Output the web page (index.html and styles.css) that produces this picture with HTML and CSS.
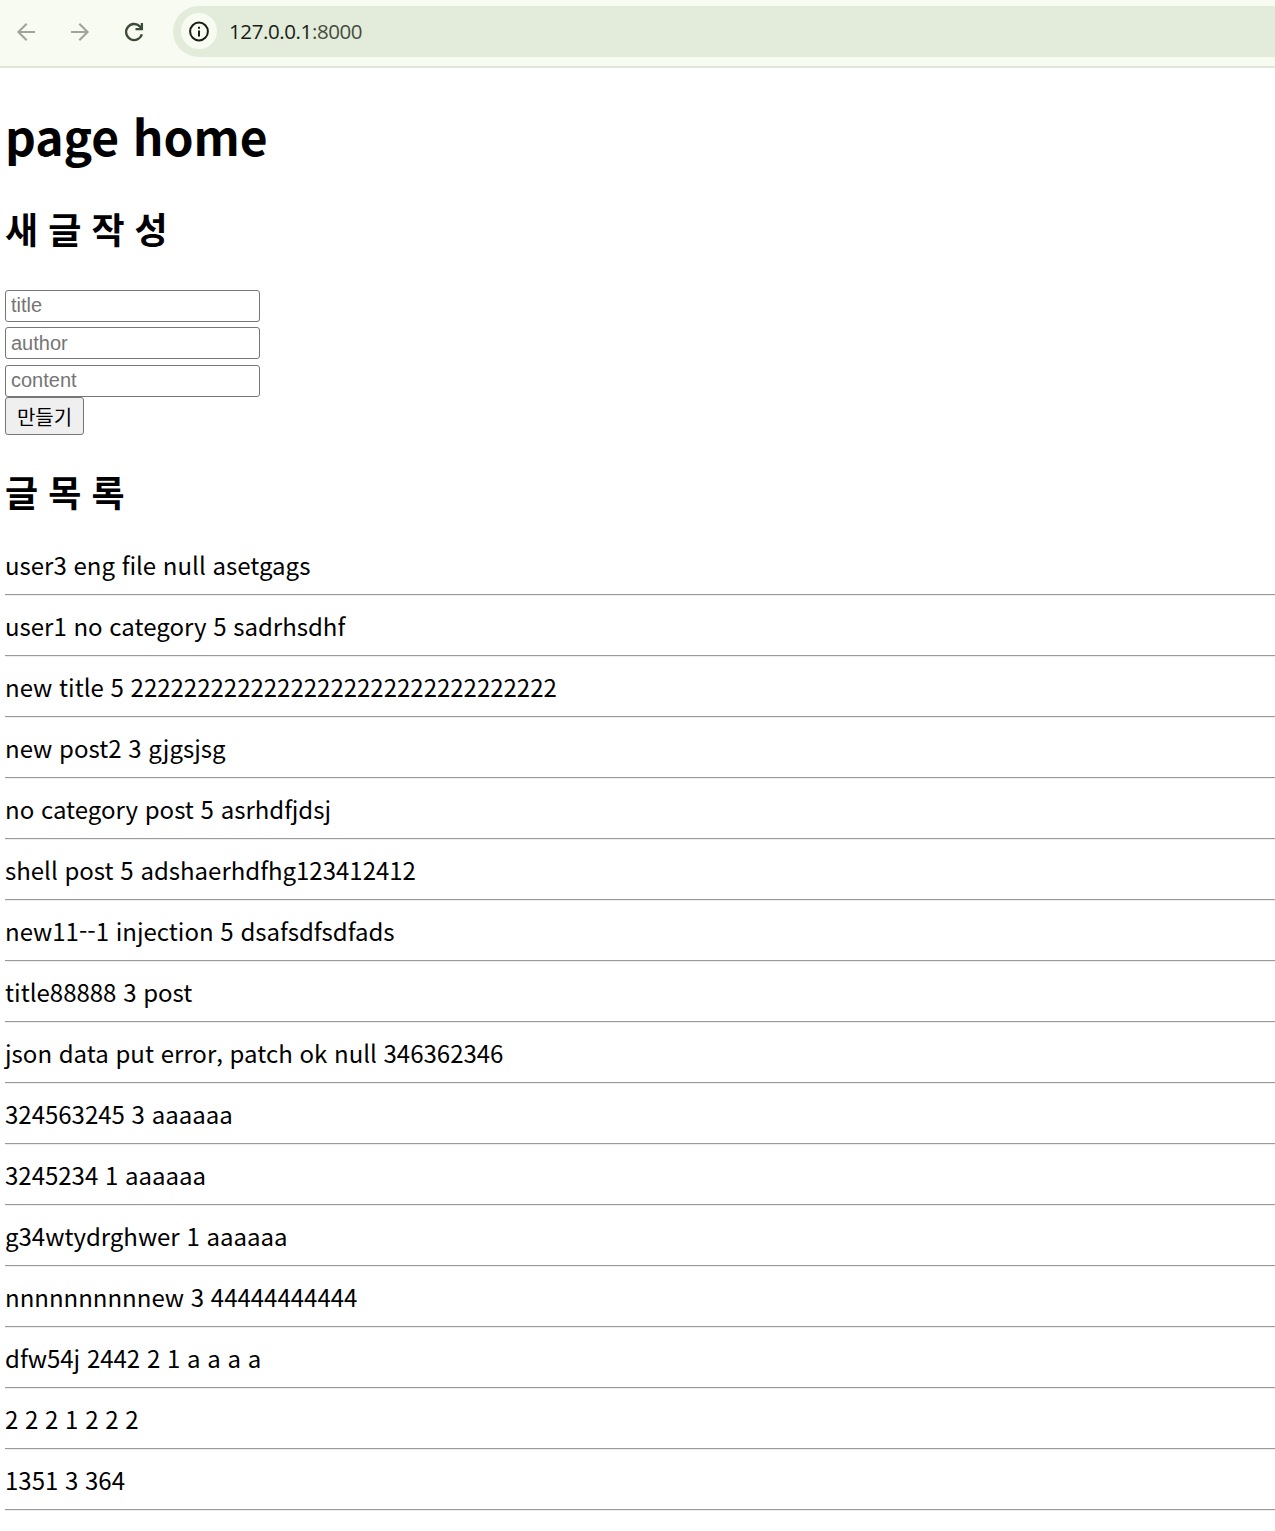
FILE: index.html
```html
<!DOCTYPE html>
<html lang="ko">
<head>
<meta charset="utf-8">
<title>page home</title>
<link rel="stylesheet" href="styles.css">
</head>
<body>
<header class="toolbar">
  <svg class="nav nav-back" width="24" height="24" viewBox="0 0 24 24"><path d="M21 13H4.500M12.700 4.700L4.400 13L12.700 21.300"/></svg>
  <svg class="nav nav-forward" width="24" height="24" viewBox="0 0 24 24"><path d="M3 13H19.500M11.300 4.700L19.600 13L11.300 21.300"/></svg>
  <svg class="nav nav-reload" width="24" height="24" viewBox="0 0 24 24"><path d="M19.800 15.200A8 8 0 1 1 18 7.600L20 9.600M19.900 4V10.200H13.500"/></svg>
  <div class="address">
    <span class="site-info"><svg width="24" height="24" viewBox="0 0 24 24"><circle cx="12" cy="12.500" r="8.900"/><path d="M12 11.500V17.500M12 7.700V9.700"/></svg></span>
    <span class="url">127.0.0.1<span class="port">:8000</span></span>
  </div>
</header>
<main class="page">
  <h1>page home</h1>
  <h2 class="new-title">새 글 작 성</h2>
  <form class="post-form">
    <input type="text" placeholder="title">
    <input type="text" placeholder="author">
    <input type="text" placeholder="content">
    <button type="button">만들기</button>
  </form>
  <h2 class="list-title">글 목 록</h2>
  <div class="posts">
    <div class="post">user3 eng file null asetgags</div>
    <div class="post">user1 no category 5 sadrhsdhf</div>
    <div class="post">new title 5 22222222222222222222222222222222</div>
    <div class="post">new post2 3 gjgsjsg</div>
    <div class="post">no category post 5 asrhdfjdsj</div>
    <div class="post">shell post 5 adshaerhdfhg123412412</div>
    <div class="post">new11--1 injection 5 dsafsdfsdfads</div>
    <div class="post">title88888 3 post</div>
    <div class="post">json data put error, patch ok null 346362346</div>
    <div class="post">324563245 3 aaaaaa</div>
    <div class="post">3245234 1 aaaaaa</div>
    <div class="post">g34wtydrghwer 1 aaaaaa</div>
    <div class="post">nnnnnnnnnnew 3 44444444444</div>
    <div class="post">dfw54j 2442 2 1 a a a a</div>
    <div class="post">2 2 2 1 2 2 2</div>
    <div class="post">1351 3 364</div>
  </div>
</main>
</body>
</html>
```

FILE: styles.css
```css
* { box-sizing: border-box; }
body {
  margin: 0;
  height: 1531px;
  overflow: hidden;
  background: #fff;
  color: #000;
  font-family: "Noto Sans CJK KR", sans-serif;
}
.toolbar {
  display: flex;
  align-items: center;
  height: 68px;
  padding: 0 0 4px 14px;
  background: #f8fbf2;
  border-bottom: 2px solid #e1e6d9;
}
.nav {
  flex: none;
  margin-right: 30px;
  fill: none;
  stroke: #a0a59b;
  stroke-width: 2.1;
}
.nav-reload { stroke: #3b4b37; stroke-width: 2.3; margin-right: 27px; }
.address {
  display: flex;
  align-items: center;
  flex: 1;
  height: 51px;
  padding-left: 8px;
  border-radius: 26px 0 0 26px;
  background: #e3ecda;
}
.site-info {
  display: flex;
  align-items: center;
  justify-content: center;
  width: 36px;
  height: 36px;
  border-radius: 50%;
  background: #f8fbf2;
}
.site-info svg { fill: none; stroke: #181d16; stroke-width: 2; }
.url {
  margin-left: 12px;
  font: 20.5px/28px "Open Sans", sans-serif;
  letter-spacing: -0.4px;
  color: #181d16;
}
.port { color: #434c3f; }
.page { padding-left: 5px; }
h1, h2 { margin: 0; font-weight: 700; }
h1 { padding-top: 29px; font-size: 48px; line-height: 76px; }
h2 { font-size: 36px; line-height: 56px; }
.new-title { padding-top: 27px; }
.list-title { padding-top: 28px; }
.post-form {
  display: flex;
  flex-direction: column;
  align-items: flex-start;
  padding-top: 34px;
}
.post-form input {
  width: 255px;
  height: 32px;
  margin: 0 0 5px;
  padding: 0 5px 2px;
  border: 1px solid #767676;
  border-radius: 3px;
  font: 20px "Liberation Sans", sans-serif;
}
.post-form input::placeholder { color: #757575; }
.post-form input:nth-of-type(2) { margin-bottom: 6px; padding: 1px 5px; }
.post-form input:nth-of-type(3) { margin-bottom: 0; }
.post-form button {
  width: 79px;
  height: 38px;
  padding: 0;
  border: 1px solid #767676;
  border-radius: 3px;
  background: #efefef;
  color: #000;
  font: 20px "Noto Sans CJK KR", sans-serif;
}
.posts { padding-top: 16px; }
.post {
  height: 61px;
  padding-top: 11px;
  border-bottom: 1px solid #eee;
  box-shadow: inset 0 -1px #9a9a9a;
  font-size: 24px;
  line-height: 38px;
  white-space: nowrap;
}
```
